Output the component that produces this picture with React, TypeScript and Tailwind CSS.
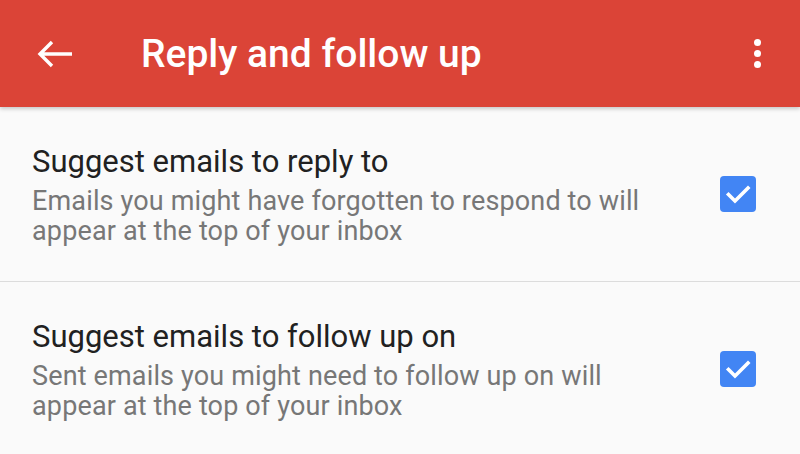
import React from "react";

const items = [
  {
    title: "Suggest emails to reply to",
    desc: "Emails you might have forgotten to respond to will appear at the top of your inbox",
  },
  {
    title: "Suggest emails to follow up on",
    desc: "Sent emails you might need to follow up on will appear at the top of your inbox",
  },
];

const CheckedBox = () => (
  <div className="w-[36px] h-[36px] rounded-[4px] bg-[#4285f4] flex items-center justify-center">
    <svg width="36" height="36" viewBox="0 0 36 36" fill="none">
      <path d="M8.5 18.5 L15 25 L28 12" stroke="white" strokeWidth="3.6" strokeLinecap="square" />
    </svg>
  </div>
);

export default function App() {
  return (
    <div className="w-[800px] h-[454px] overflow-hidden bg-[#fafafa] font-['Roboto',sans-serif]">
      <header className="relative z-10 h-[107px] bg-[#db4437] flex items-center shadow-[0_2px_4px_rgba(0,0,0,0.2)]">
        <div className="w-[141px] pl-[36px] flex items-center">
          <svg width="38" height="30" viewBox="0 0 38 30" fill="none">
            <path d="M4 15 H36 M16 3 L4 15 L16 27" stroke="white" strokeWidth="3.4" strokeLinejoin="miter" />
          </svg>
        </div>
        <h1 className="flex-1 pt-[2px] text-white text-[39px] font-medium leading-none">Reply and follow up</h1>
        <div className="w-[86px] flex flex-col items-center gap-[4px]">
          <span className="w-[7px] h-[7px] rounded-full bg-white" />
          <span className="w-[7px] h-[7px] rounded-full bg-white" />
          <span className="w-[7px] h-[7px] rounded-full bg-white" />
        </div>
      </header>
      {items.map((item) => (
        <div
          key={item.title}
          className="h-[175px] border-b border-[#dcdcdc] flex items-center justify-between pl-[32px] pr-[44px]"
        >
          <div className="w-[630px]">
            <p className="mb-[5px] text-[31px] leading-[38px] text-[#212121]">{item.title}</p>
            <p className="text-[27px] leading-[30px] tracking-[0.15px] text-[#777777]">{item.desc}</p>
          </div>
          <CheckedBox />
        </div>
      ))}
    </div>
  );
}
